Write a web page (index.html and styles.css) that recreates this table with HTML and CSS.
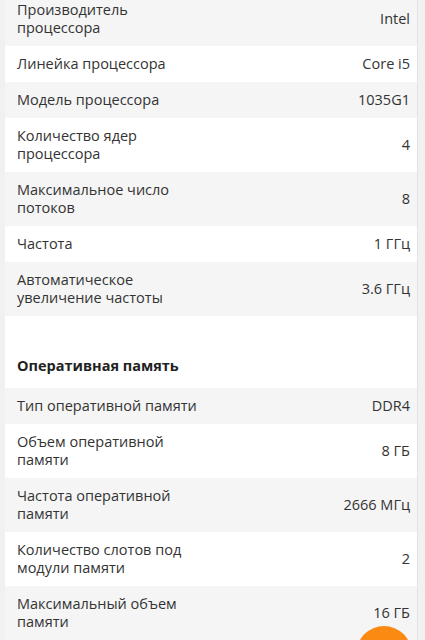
FILE: index.html
```html
<!DOCTYPE html>
<html lang="ru">
<head>
    <meta charset="UTF-8">
    <meta name="viewport" content="width=device-width, initial-scale=1.0">
    <title>Характеристики</title>
    <link rel="stylesheet" href="styles.css">
</head>
<body>
    <div class="page">
        <div class="specs">
            <div class="row first">
                <div class="label">Производитель процессора</div>
                <div class="value">Intel</div>
            </div>
            <div class="row">
                <div class="label">Линейка процессора</div>
                <div class="value">Core i5</div>
            </div>
            <div class="row">
                <div class="label">Модель процессора</div>
                <div class="value">1035G1</div>
            </div>
            <div class="row">
                <div class="label">Количество ядер процессора</div>
                <div class="value">4</div>
            </div>
            <div class="row">
                <div class="label">Максимальное число потоков</div>
                <div class="value">8</div>
            </div>
            <div class="row">
                <div class="label">Частота</div>
                <div class="value">1 ГГц</div>
            </div>
            <div class="row">
                <div class="label">Автоматическое увеличение частоты</div>
                <div class="value">3.6 ГГц</div>
            </div>
        </div>

        <h3 class="group-title">Оперативная память</h3>

        <div class="specs">
            <div class="row">
                <div class="label">Тип оперативной памяти</div>
                <div class="value">DDR4</div>
            </div>
            <div class="row">
                <div class="label">Объем оперативной памяти</div>
                <div class="value">8 ГБ</div>
            </div>
            <div class="row">
                <div class="label">Частота оперативной памяти</div>
                <div class="value">2666 МГц</div>
            </div>
            <div class="row">
                <div class="label">Количество слотов под модули памяти</div>
                <div class="value">2</div>
            </div>
            <div class="row">
                <div class="label">Максимальный объем памяти</div>
                <div class="value">16 ГБ</div>
            </div>
        </div>
    </div>

    <button class="fab" type="button"></button>
</body>
</html>
```

FILE: styles.css
```css
body {
    margin: 0;
    background-color: #f1f1f1;
    font-family: "Open Sans", "Noto Sans", sans-serif;
    font-size: 14.5px;
    color: #333;
}
.page {
    margin: 0 7px 0 5px;
    background: #fff;
    border-right: 1px solid #e2e2e2;
    min-height: 700px;
}
.specs {
    display: flex;
    flex-direction: column;
}
.row {
    display: flex;
    align-items: center;
    justify-content: space-between;
    padding: 9px 7px 9px 12px;
    line-height: 18px;
}
.row:nth-child(odd) {
    background-color: #f5f5f5;
}
.row.first {
    margin-top: -8px;
}
.label {
    width: 188px;
}
.value {
    text-align: right;
}
.group-title {
    margin: 0;
    padding: 41px 12px 13px;
    font-size: 14.5px;
    line-height: 18px;
    font-weight: bold;
    color: #222;
}
.fab {
    position: fixed;
    left: 356px;
    top: 626px;
    width: 56px;
    height: 56px;
    border: none;
    border-radius: 50%;
    background-color: #fb8a12;
}
```
